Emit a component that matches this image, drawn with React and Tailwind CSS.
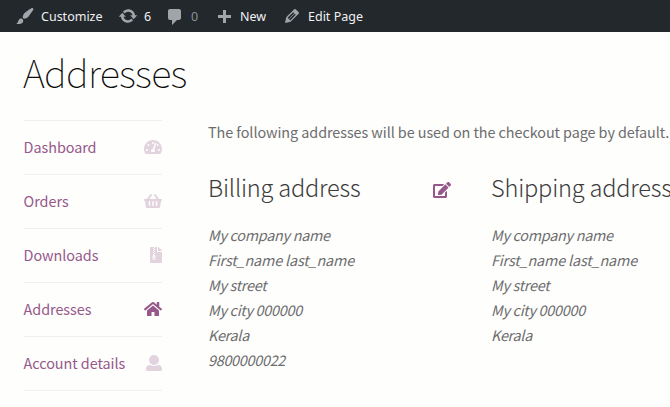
import { FaTachometerAlt, FaShoppingBasket, FaFileArchive, FaHome, FaEdit } from "react-icons/fa";

const PATHS = {
  brush:
    "M18.33 3.57s.27-.8-.31-1.36c-.53-.52-1.22-.24-1.22-.24-.61.3-5.76 3.47-7.67 5.57-.86.96-2.06 3.79-1.09 4.82.92.98 3.96-.17 4.79-1 2.06-2.06 5.21-7.17 5.5-7.79zM1.4 17.65c2.37-1.56 1.46-3.41 3.23-4.64.93-.65 2.22-.62 3.08.29.63.67.8 2.57-.16 3.46-1.57 1.45-4 1.55-6.15.89z",
  update:
    "M10.2 3.28c3.53 0 6.43 2.61 6.92 6h2.08l-3.5 4-3.5-4h2.32c-.45-1.97-2.21-3.45-4.32-3.45-1.45 0-2.73.71-3.54 1.78L4.95 5.66C6.23 4.2 8.11 3.28 10.2 3.28zm-.4 13.44c-3.52 0-6.43-2.61-6.92-6H.8l3.5-4c1.17 1.33 2.33 2.67 3.5 4H5.48c.45 1.97 2.21 3.45 4.32 3.45 1.45 0 2.73-.71 3.54-1.78l1.71 1.95c-1.28 1.46-3.15 2.38-5.25 2.38z",
  comment:
    "M5 2h9c1.1 0 2 .9 2 2v7c0 1.1-.9 2-2 2h-2l-5 5v-5H5c-1.1 0-2-.9-2-2V4c0-1.1.9-2 2-2z",
  plus: "M17 7v3h-5v5H9v-5H4V7h5V2h3v5h5z",
  edit:
    "M13.89 3.39l2.71 2.72c.46.46.42 1.24.03 1.64l-8.01 8.02-5.56 1.16 1.16-5.58s7.6-7.63 7.99-8.03c.39-.39 1.22-.39 1.68.07zm-2.73 2.79l-5.59 5.61 1.11 1.11 5.54-5.65zm-2.97 8.23l5.58-5.6-1.07-1.08-5.59 5.6z",
};

function BarItem({ icon, label, width, iconClass = "mt-1.5", labelClass = "text-[#f0f0f1]" }) {
  return (
    <div className={`flex h-8 shrink-0 items-start ${width}`}>
      <svg viewBox="0 0 20 20" className={`mr-1.5 h-5 w-5 shrink-0 fill-[#a0a5aa] ${iconClass}`}>
        <path d={PATHS[icon]} />
      </svg>
      <span className={`leading-[33px] ${labelClass}`}>{label}</span>
    </div>
  );
}

// Round head over a wide, round-shouldered body.
function UserIcon({ className }) {
  return (
    <svg viewBox="0 0 16 16" fill="currentColor" className={className}>
      <circle cx="8" cy="5" r="5" />
      <path d="M4 10c1.100.6 2.500 1 4 1s2.900-.4 4-1c2.500 0 4 1.500 4 3.700v.8c0 .9-.6 1.500-1.500 1.500h-13C.6 16 0 15.400 0 14.500v-.8C0 11.500 1.500 10 4 10z" />
    </svg>
  );
}

const NAV = [
  { label: "Dashboard", Icon: FaTachometerAlt, size: "w-[18px]" },
  { label: "Orders", Icon: FaShoppingBasket, size: "w-[18px]" },
  { label: "Downloads", Icon: FaFileArchive, size: "w-3" },
  { label: "Addresses", Icon: FaHome, size: "w-[18px]", active: true },
  { label: "Account details", Icon: UserIcon, size: "w-4" },
];

function Address({ title, lines, editable, className }) {
  return (
    <section className={`shrink-0 ${className}`}>
      <header className="flex h-10 items-center justify-between">
        <h2 className="whitespace-nowrap text-[23.6px] font-light leading-10 tracking-[-0.2px] text-[#3c3c3c]">{title}</h2>
        {editable && <FaEdit className="mt-1.5 h-4 w-[18px] text-[#96588a]" />}
      </header>
      <address className="mt-[15px] text-[14.4px] leading-[25px] text-[#6d6d6d]">
        {lines.map((line) => (
          <div key={line} className={line.includes("_") ? "tracking-[-0.15px]" : "tracking-[-0.28px]"}>
            {line}
          </div>
        ))}
      </address>
    </section>
  );
}

export default function App() {
  const lines = ["My company name", "First_name last_name", "My street", "My city 000000", "Kerala"];
  return (
    <div className="h-[407px] w-[670px] overflow-hidden bg-[#fefefd] font-['Noto_Sans_CJK_SC',sans-serif]">
      <nav className="flex h-8 bg-[#23282d] pl-[15px] font-['Noto_Sans',sans-serif] text-[12.5px]">
        <BarItem icon="brush" label="Customize" width="w-[103px]" />
        <BarItem icon="update" label="6" width="w-[47px]" />
        <BarItem icon="comment" label="0" width="w-[49px]" iconClass="mt-[7px]" labelClass="text-[#8c9196]" />
        <BarItem icon="plus" label="New" width="w-[68px]" iconClass="mt-2" />
        <BarItem icon="edit" label="Edit Page" width="w-[100px]" />
      </nav>
      <h1 className="mt-3 pl-[23px] text-[38px] font-thin leading-[56px] tracking-[-0.7px] text-[#0c0c0c]">
        Addresses
      </h1>
      <div className="mt-5 flex pl-6">
        <ul className="w-[138px] shrink-0 border-t border-[#f0f0f0]">
          {NAV.map(({ label, Icon, size, active }) => (
            <li key={label} className="flex h-[54px] items-center justify-between border-b border-[#f0f0f0] text-[14.4px] text-[#96588a]">
              <span className="-ml-[0.4px] whitespace-nowrap pb-0.5 tracking-[-0.05px]">{label}</span>
              <Icon className={`mb-0.5 h-4 ${size} ${active ? "" : "opacity-25"}`} />
            </li>
          ))}
        </ul>
        <main className="-mt-px ml-[46px] w-[525px] shrink-0">
          <p className="whitespace-nowrap text-[14.4px] leading-[25px] tracking-[-0.07px] text-[#6d6d6d]">
            The following addresses will be used on the checkout page by default.
          </p>
          <div className="mt-[23px] flex">
            <Address title="Billing address" lines={[...lines, "9800000022"]} editable className="w-[243px]" />
            <Address title="Shipping address" lines={lines} className="ml-10 w-[242px]" />
          </div>
        </main>
      </div>
    </div>
  );
}
